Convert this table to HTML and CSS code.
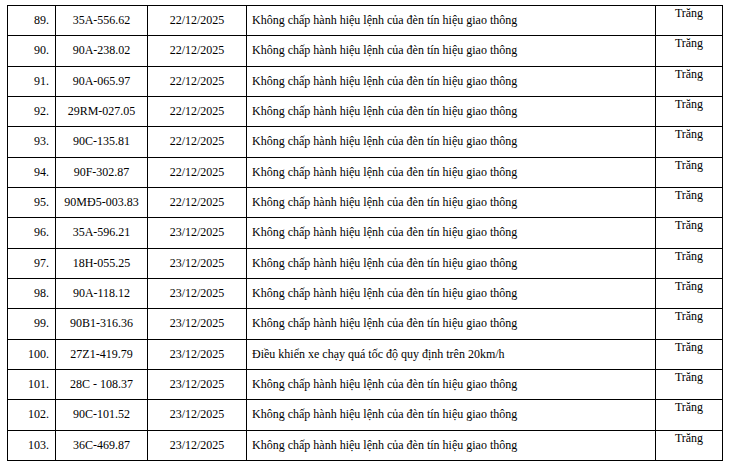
FILE: index.html
```html
<!DOCTYPE html>
<html lang="vi">
<head>
<meta charset="utf-8">
<title>Danh sách vi phạm</title>
<link rel="stylesheet" href="styles.css">
</head>
<body>
<table class="list">
<colgroup>
<col class="c-no"><col class="c-plate"><col class="c-date"><col class="c-act"><col class="c-color">
</colgroup>
<tbody>
<tr><td class="no">89.</td><td class="ctr">35A-556.62</td><td class="ctr">22/12/2025</td><td class="act">Không chấp hành hiệu lệnh của đèn tín hiệu giao thông</td><td class="color">Trăng</td></tr>
<tr><td class="no">90.</td><td class="ctr">90A-238.02</td><td class="ctr">22/12/2025</td><td class="act">Không chấp hành hiệu lệnh của đèn tín hiệu giao thông</td><td class="color">Trăng</td></tr>
<tr><td class="no">91.</td><td class="ctr">90A-065.97</td><td class="ctr">22/12/2025</td><td class="act">Không chấp hành hiệu lệnh của đèn tín hiệu giao thông</td><td class="color">Trăng</td></tr>
<tr><td class="no">92.</td><td class="ctr">29RM-027.05</td><td class="ctr">22/12/2025</td><td class="act">Không chấp hành hiệu lệnh của đèn tín hiệu giao thông</td><td class="color">Trăng</td></tr>
<tr><td class="no">93.</td><td class="ctr">90C-135.81</td><td class="ctr">22/12/2025</td><td class="act">Không chấp hành hiệu lệnh của đèn tín hiệu giao thông</td><td class="color">Trăng</td></tr>
<tr><td class="no">94.</td><td class="ctr">90F-302.87</td><td class="ctr">22/12/2025</td><td class="act">Không chấp hành hiệu lệnh của đèn tín hiệu giao thông</td><td class="color">Trăng</td></tr>
<tr><td class="no">95.</td><td class="ctr">90MĐ5-003.83</td><td class="ctr">22/12/2025</td><td class="act">Không chấp hành hiệu lệnh của đèn tín hiệu giao thông</td><td class="color">Trăng</td></tr>
<tr><td class="no">96.</td><td class="ctr">35A-596.21</td><td class="ctr">23/12/2025</td><td class="act">Không chấp hành hiệu lệnh của đèn tín hiệu giao thông</td><td class="color">Trăng</td></tr>
<tr><td class="no">97.</td><td class="ctr">18H-055.25</td><td class="ctr">23/12/2025</td><td class="act">Không chấp hành hiệu lệnh của đèn tín hiệu giao thông</td><td class="color">Trăng</td></tr>
<tr><td class="no">98.</td><td class="ctr">90A-118.12</td><td class="ctr">23/12/2025</td><td class="act">Không chấp hành hiệu lệnh của đèn tín hiệu giao thông</td><td class="color">Trăng</td></tr>
<tr><td class="no">99.</td><td class="ctr">90B1-316.36</td><td class="ctr">23/12/2025</td><td class="act">Không chấp hành hiệu lệnh của đèn tín hiệu giao thông</td><td class="color">Trăng</td></tr>
<tr><td class="no">100.</td><td class="ctr">27Z1-419.79</td><td class="ctr">23/12/2025</td><td class="act">Điều khiển xe chạy quá tốc độ quy định trên 20km/h</td><td class="color">Trăng</td></tr>
<tr><td class="no">101.</td><td class="ctr">28C - 108.37</td><td class="ctr">23/12/2025</td><td class="act">Không chấp hành hiệu lệnh của đèn tín hiệu giao thông</td><td class="color">Trăng</td></tr>
<tr><td class="no">102.</td><td class="ctr">90C-101.52</td><td class="ctr">23/12/2025</td><td class="act">Không chấp hành hiệu lệnh của đèn tín hiệu giao thông</td><td class="color">Trăng</td></tr>
<tr><td class="no">103.</td><td class="ctr">36C-469.87</td><td class="ctr">23/12/2025</td><td class="act">Không chấp hành hiệu lệnh của đèn tín hiệu giao thông</td><td class="color">Trăng</td></tr>
</tbody>
</table>
</body>
</html>
```
FILE: styles.css
```css
html, body {
  background: #ffffff;
}
body {
  margin: 5px 0 0 7px;
  font-family: "Liberation Serif", "Times New Roman", serif;
  font-size: 12px;
  color: #000000;
}
.list {
  border-collapse: collapse;
  table-layout: fixed;
  width: 715px;
}
.c-no { width: 48px; }
.c-plate { width: 92px; }
.c-date { width: 99px; }
.c-act { width: 409px; }
.c-color { width: 67px; }
.list tr {
  height: 30.33px;
}
.list td {
  border: 1px solid #000000;
  padding: 0 5px;
  vertical-align: middle;
  white-space: nowrap;
  line-height: normal;
}
.list td.no {
  text-align: right;
  padding-right: 6px;
}
.list td.ctr {
  text-align: center;
}
.list td.act {
  text-align: left;
  padding-left: 5px;
}
.list td.color {
  text-align: center;
  vertical-align: top;
  padding-top: 0;
}
```
